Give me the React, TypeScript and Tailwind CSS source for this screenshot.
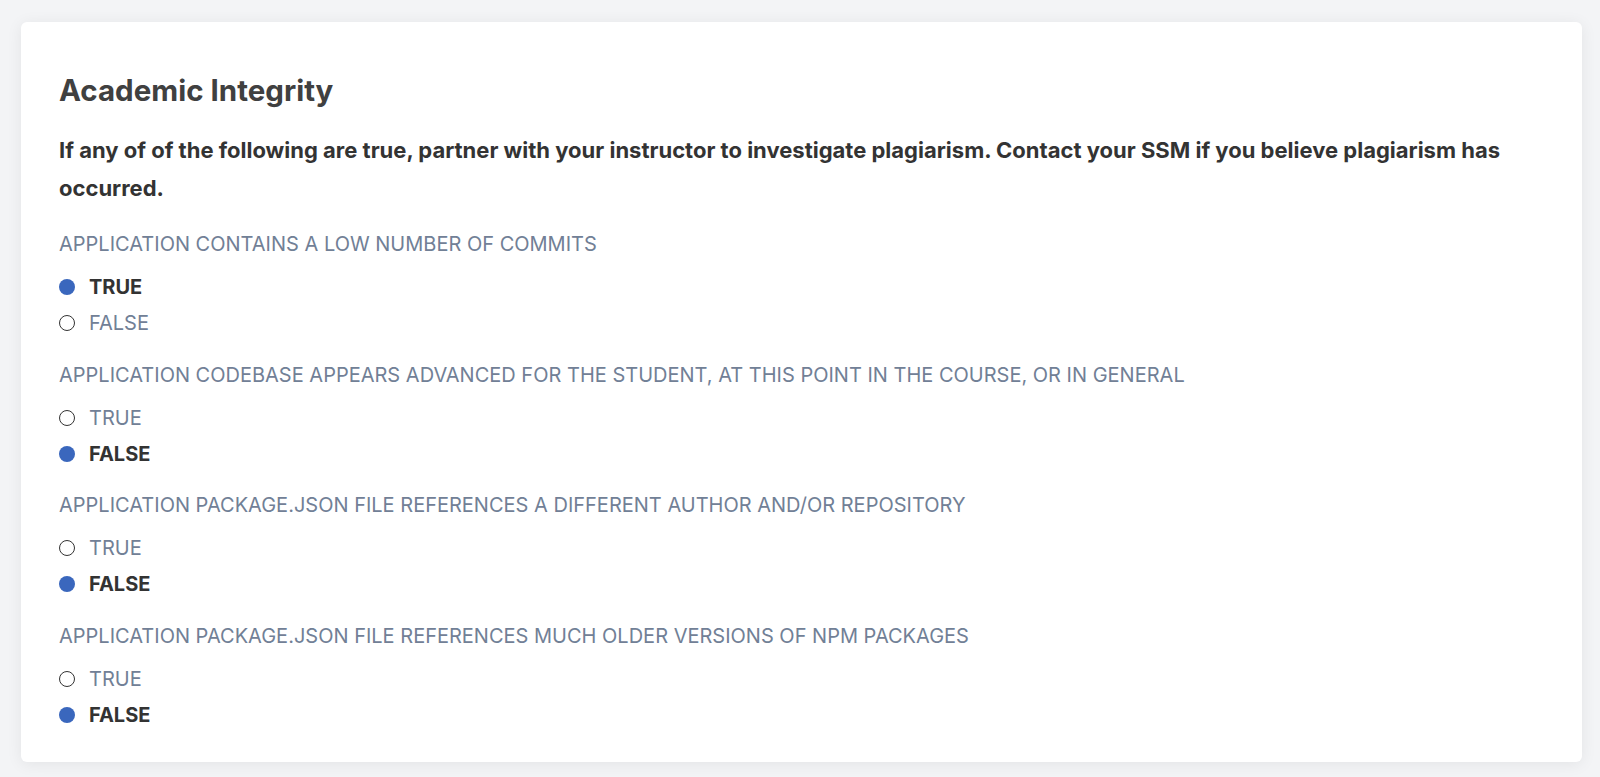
import { useState } from "react";

const QUESTIONS = [
  { id: "commits", label: "Application contains a low number of commits", value: true },
  {
    id: "advanced",
    label: "Application codebase appears advanced for the student, at this point in the course, or in general",
    value: false,
  },
  {
    id: "author",
    label: "Application package.json file references a different author and/or repository",
    value: false,
  },
  {
    id: "packages",
    label: "Application package.json file references much older versions of npm packages",
    value: false,
  },
];

const RadioOption = ({
  checked,
  label,
  onSelect,
}: {
  checked: boolean;
  label: string;
  onSelect: () => void;
}) => (
  <label className="flex h-9 cursor-pointer items-center gap-[14px]" onClick={onSelect}>
    <span
      className={
        checked
          ? "h-4 w-4 rounded-full bg-[#3a67bd]"
          : "h-4 w-4 rounded-full border border-[#333] bg-white"
      }
    />
    <span
      className={
        checked
          ? "text-[20px] font-bold uppercase text-[#333]"
          : "text-[20px] uppercase text-[#718096]"
      }
    >
      {label}
    </span>
  </label>
);

export default function App() {
  const [answers, setAnswers] = useState<Record<string, boolean>>(
    Object.fromEntries(QUESTIONS.map((q) => [q.id, q.value])),
  );

  return (
    <div className="min-h-screen bg-[#f3f4f6] pl-[21px] pr-[18px] pt-[22px] font-['Inter',sans-serif]">
      <div className="rounded-md bg-white px-[38px] pb-[29px] pt-[50px] shadow-[0_2px_16px_rgba(0,0,0,0.07)]">
        <h2 className="text-[29.5px] font-bold leading-9 text-[#404040]">Academic Integrity</h2>
        <p className="mt-[23px] text-[22px] font-bold leading-[38px] text-[#333]">
          If any of of the following are true, partner with your instructor to investigate plagiarism. Contact your
          SSM if you believe plagiarism has occurred.
        </p>

        <div className="mt-[23px]">
          {QUESTIONS.map((q, i) => (
            <div key={q.id} className={i > 0 ? "mt-[19.5px]" : ""}>
              <div className="text-[20px] uppercase leading-7 text-[#718096]">{q.label}</div>
              <div className="mt-[11px]">
                <RadioOption
                  checked={answers[q.id] === true}
                  label="True"
                  onSelect={() => setAnswers((prev) => ({ ...prev, [q.id]: true }))}
                />
                <RadioOption
                  checked={answers[q.id] === false}
                  label="False"
                  onSelect={() => setAnswers((prev) => ({ ...prev, [q.id]: false }))}
                />
              </div>
            </div>
          ))}
        </div>
      </div>
    </div>
  );
}
